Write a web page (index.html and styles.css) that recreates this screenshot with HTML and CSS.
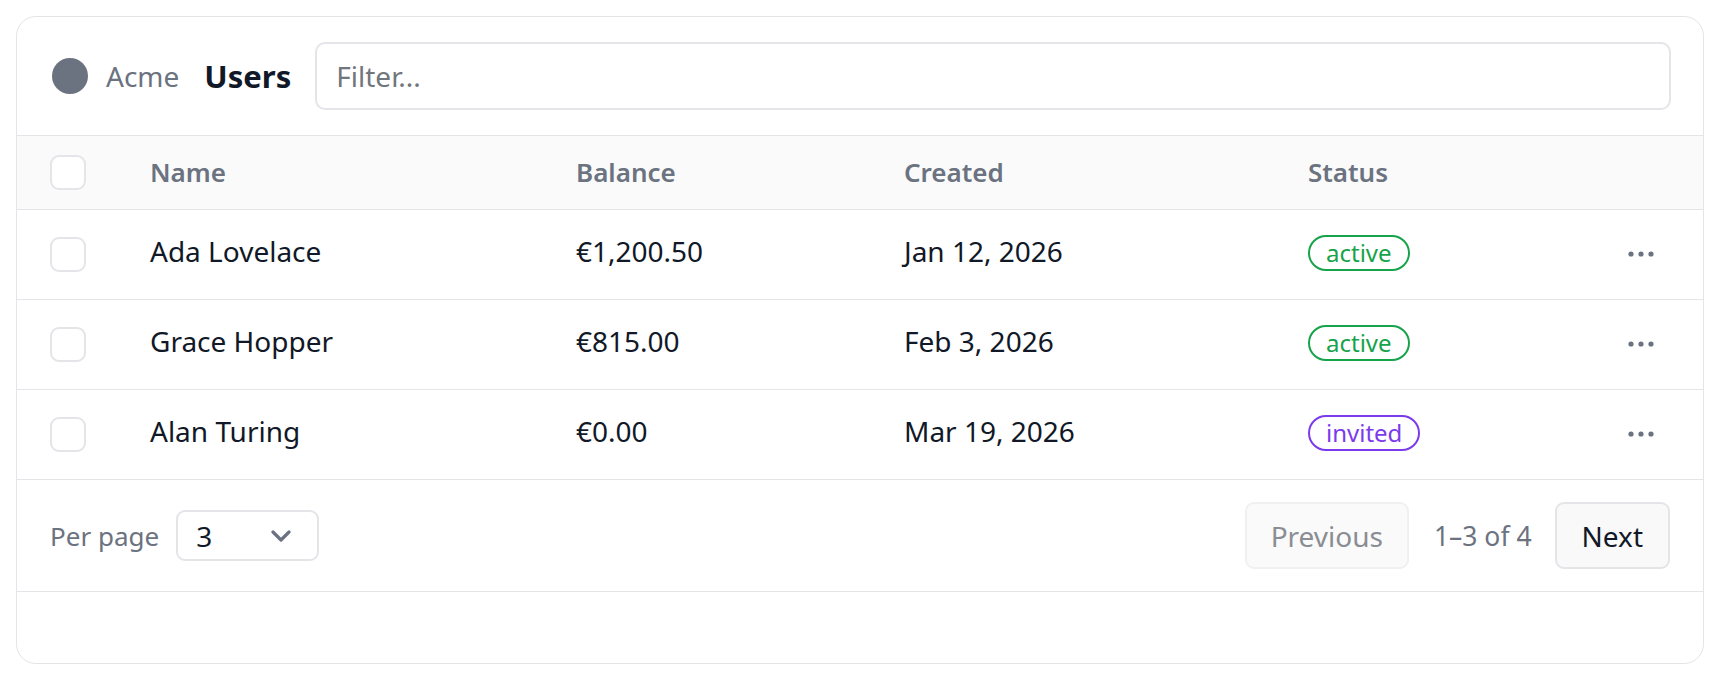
FILE: index.html
```html
<!DOCTYPE html>
<html lang="en">
<head>
<meta charset="utf-8">
<title>Users</title>
<link rel="stylesheet" href="styles.css">
</head>
<body>
<div class="card">
  <div class="toolbar">
    <div class="brand">
      <span class="logo"></span>
      <span class="brand-name">Acme</span>
    </div>
    <h1 class="title">Users</h1>
    <input class="filter" type="text" placeholder="Filter...">
  </div>

  <div class="row head">
    <span class="check"></span>
    <span class="th">Name</span>
    <span class="th">Balance</span>
    <span class="th">Created</span>
    <span class="th">Status</span>
    <span></span>
  </div>

  <div class="row">
    <span class="check"></span>
    <span class="td">Ada Lovelace</span>
    <span class="td">€1,200.50</span>
    <span class="td">Jan 12, 2026</span>
    <span class="cell-badge"><span class="badge badge-active">active</span></span>
    <span class="more"><svg width="26" height="6" viewBox="0 0 26 6"><circle cx="3" cy="3" r="2.6"/><circle cx="13" cy="3" r="2.6"/><circle cx="23" cy="3" r="2.6"/></svg></span>
  </div>
  <div class="row">
    <span class="check"></span>
    <span class="td">Grace Hopper</span>
    <span class="td">€815.00</span>
    <span class="td">Feb 3, 2026</span>
    <span class="cell-badge"><span class="badge badge-active">active</span></span>
    <span class="more"><svg width="26" height="6" viewBox="0 0 26 6"><circle cx="3" cy="3" r="2.6"/><circle cx="13" cy="3" r="2.6"/><circle cx="23" cy="3" r="2.6"/></svg></span>
  </div>
  <div class="row">
    <span class="check"></span>
    <span class="td">Alan Turing</span>
    <span class="td">€0.00</span>
    <span class="td">Mar 19, 2026</span>
    <span class="cell-badge"><span class="badge badge-invited">invited</span></span>
    <span class="more"><svg width="26" height="6" viewBox="0 0 26 6"><circle cx="3" cy="3" r="2.6"/><circle cx="13" cy="3" r="2.6"/><circle cx="23" cy="3" r="2.6"/></svg></span>
  </div>

  <div class="footer">
    <div class="per-page">
      <span class="muted">Per page</span>
      <div class="select">
        <span class="select-value">3</span>
        <svg class="chevron" width="20" height="12" viewBox="0 0 20 12"><path d="M2 2 L10 10 L18 2" fill="none" stroke="#6b7280" stroke-width="3.2" stroke-linecap="round" stroke-linejoin="round"/></svg>
      </div>
    </div>
    <div class="pager">
      <button class="btn btn-disabled" type="button">Previous</button>
      <span class="muted range">1–3 of 4</span>
      <button class="btn" type="button">Next</button>
    </div>
  </div>
  <div class="spacer"></div>
</div>
</body>
</html>
```

FILE: styles.css
```css
* { box-sizing: border-box; }

html, body {
  margin: 0;
  padding: 0;
  background: #ffffff;
}

body {
  padding: 16px;
  font-family: "Noto Sans", "Open Sans", sans-serif;
  color: #111827;
}

.card {
  border: 1px solid #e4e4e9;
  border-radius: 20px;
  background: #ffffff;
  overflow: hidden;
}

/* toolbar */
.toolbar {
  display: flex;
  align-items: center;
  padding: 25px 32px 25px 35px;
  border-bottom: 1px solid #e4e4e9;
}

.brand {
  display: flex;
  align-items: center;
  gap: 18px;
}

.logo {
  width: 36px;
  height: 36px;
  border-radius: 50%;
  background: #6b7280;
}

.brand-name {
  font-size: 28px;
  color: #6b7280;
  line-height: 1;
}

.title {
  margin: 0 24px 0 25px;
  font-size: 31px;
  font-weight: 700;
  color: #111827;
  line-height: 1;
}

.filter {
  flex: 1;
  height: 68px;
  border: 2px solid #e4e4e9;
  border-radius: 10px;
  padding: 0 19px;
  font-family: inherit;
  font-size: 28px;
  color: #111827;
  background: #ffffff;
  outline: none;
}

.filter::placeholder {
  color: #71757c;
}

/* rows */
.row {
  display: grid;
  grid-template-columns: 100px 426px 328px 404px 1fr 26px;
  align-items: center;
  height: 90px;
  padding: 0 49px 0 33px;
  border-bottom: 1px solid #e4e4e9;
}

.row.head {
  height: 74px;
  background: #fafafa;
}

.check {
  width: 36px;
  height: 35px;
  border: 2px solid #e4e4e9;
  border-radius: 9px;
  background: #ffffff;
}

.th {
  font-size: 26px;
  font-weight: 600;
  color: #6b7280;
  padding-bottom: 2px;
}

.td {
  font-size: 28px;
  color: #111827;
  padding-bottom: 7px;
}

.cell-badge {
  display: flex;
  padding-bottom: 4px;
}

.badge {
  display: inline-block;
  height: 36px;
  line-height: 32px;
  padding: 0 16px;
  border: 2px solid;
  border-radius: 18px;
  font-size: 24px;
}

.badge-active {
  color: #16a34a;
  border-color: #16a34a;
}

.badge-invited {
  color: #7c3aed;
  border-color: #7c3aed;
}

.more {
  display: flex;
  align-items: center;
  fill: #6b7280;
  padding-bottom: 2px;
}

/* footer */
.footer {
  display: flex;
  align-items: center;
  justify-content: space-between;
  height: 112px;
  padding: 0 33px;
  border-bottom: 1px solid #e4e4e9;
}

.per-page {
  display: flex;
  align-items: center;
  gap: 17px;
}

.muted {
  font-size: 26px;
  color: #6b7280;
}

.select {
  display: flex;
  align-items: center;
  justify-content: space-between;
  width: 143px;
  height: 51px;
  padding: 0 26px 0 18px;
  border: 2px solid #e4e4e9;
  border-radius: 9px;
}

.select-value {
  font-size: 28px;
  color: #111827;
}

.chevron {
  display: block;
}

.pager {
  display: flex;
  align-items: center;
}

.range {
  margin: 0 23px 0 25px;
  font-size: 26.5px;
}

.btn {
  height: 67px;
  padding: 0 25px;
  border: 2px solid #e4e4e9;
  border-radius: 9px;
  background: #f9f9fa;
  font-family: inherit;
  font-size: 28px;
  color: #111827;
}

.btn-disabled {
  padding: 0 24px;
  border-color: #f0f0f2;
  background: #fafafa;
  color: #8a8d93;
}

.spacer {
  height: 71px;
}
```
